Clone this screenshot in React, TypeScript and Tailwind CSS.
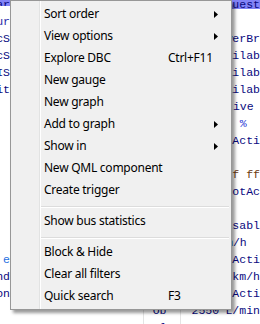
import { ReactNode } from 'react'

type Row = {
  l?: string
  lc?: string
  m1?: string
  m2?: string
  r?: string
  rc?: string
}

// table rows behind the popup menu (only the edges show)
const rows: Row[] = [
  { l: 'ar', r: 'quest' },
  { l: 'ur', lc: '#1f2aa8' },
  { l: 'cS', r: 'werBr' },
  { l: 'cS', r: 'ailab' },
  { l: 'IS', r: 'ailab' },
  { l: 'it', r: 'ailab' },
  { r: 'tive' },
  { r: '  %', rc: '#2b3bd6' },
  { r: ' Acti' },
  {},
  { r: 'ff ff', rc: '#6b3a10' },
  { r: 'NotAc' },
  {},
  { r: 'isabl' },
  { r: 'm/h' },
  { l: 'e', lc: '#1f6fe0', r: ' Acti' },
  { l: 'nd', r: ' km/h' },
  { l: 'on', r: ' Acti' },
  { m1: 'Ob', m2: '2550', r: 'L/min' },
  { m1: '0l', m2: '1000', r: 'RPM' },
]

const menu = [
  { label: 'Sort order', sub: true },
  { label: 'View options', sub: true },
  { label: 'Explore DBC', shortcut: 'Ctrl+F11' },
  { label: 'New gauge' },
  { label: 'New graph' },
  { label: 'Add to graph', sub: true },
  { label: 'Show in', sub: true },
  { label: 'New QML component' },
  { label: 'Create trigger' },
  { sep: true },
  { label: 'Show bus statistics' },
  { sep: true },
  { label: 'Block & Hide' },
  { label: 'Clear all filters' },
  { label: 'Quick search', shortcut: 'F3' },
]

function Background() {
  return (
    <div className="flex flex-col -mt-[4.5px] font-['Liberation_Mono',monospace] text-[11.5px] leading-[17px] text-[#0a0a80] whitespace-pre">
      {rows.map((row, i) => {
        const first = i === 0
        return (
          <div key={i} className={`flex ${first ? 'h-[13.5px] mb-[3.5px]' : 'h-[17px]'}`}>
            <div
              className={`w-[10px] overflow-hidden flex justify-end self-start ${first ? 'h-[10.5px] bg-[#8383f7]' : 'h-[17px]'}`}
              style={row.lc ? { color: row.lc } : undefined}
            >
              <span>{row.l}</span>
            </div>
            <div className="w-[133px]" />
            <div className="w-[37px] border-l border-[#e4e4e4] pl-[9px]">{row.m1}</div>
            <div className="w-[46px] border-l border-[#e4e4e4] pl-[11px]">{row.m2}</div>
            <div
              className={`flex-1 ${first ? 'bg-[#8383f7]' : ''}`}
              style={row.rc ? { color: row.rc } : undefined}
            >
              {row.r}
            </div>
          </div>
        )
      })}
    </div>
  )
}

function Arrow() {
  return (
    <svg width="4" height="7" viewBox="0 0 4 7" className="ml-auto mr-[13px]">
      <polygon points="0,0 4,3.5 0,7" fill="#000" />
    </svg>
  )
}

function MenuItem({ label, shortcut, sub }: { label?: string; shortcut?: string; sub?: boolean }) {
  return (
    <div className="flex h-[22px] items-center pl-[3px]">
      <span className="w-[124px] whitespace-nowrap">{label}</span>
      {shortcut && <span>{shortcut}</span>}
      {sub && <Arrow />}
    </div>
  )
}

function Separator() {
  return (
    <div className="h-[9px] pt-[5px] mr-[2px]">
      <div className="border-t border-b border-t-[#dcdcdc] border-b-white" />
    </div>
  )
}

function ContextMenu({ children }: { children?: ReactNode }) {
  return (
    <div className="absolute left-[10px] top-0 w-[222px] flex border border-[#979797] bg-[#f0f0f0] shadow-[3px_3px_3px_rgba(0,0,0,0.4)] font-['Noto_Sans',sans-serif] text-[12px] tracking-[-0.25px] text-black">
      <div className="w-[29px] border-r border-[#e2e3e3]" />
      <div className="flex-1 border-l border-white py-[2px]">
        {menu.map((m, i) =>
          m.sep ? <Separator key={i} /> : <MenuItem key={i} label={m.label} shortcut={m.shortcut} sub={m.sub} />
        )}
        {children}
      </div>
    </div>
  )
}

export default function App() {
  return (
    <div className="relative w-[260px] h-[324px] overflow-hidden bg-white">
      <Background />
      <ContextMenu />
    </div>
  )
}
